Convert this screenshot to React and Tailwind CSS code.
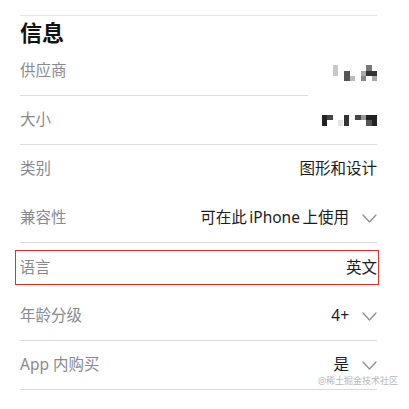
const font = { fontFamily: '"Noto Sans", "Noto Sans CJK SC", sans-serif' };

const Chevron = () => (
  <svg width="15" height="9" viewBox="0 0 15 9" className="ml-[13px] shrink-0">
    <path d="M1 1 L7.5 8 L14 1" fill="none" stroke="#8e8e93" strokeWidth="1.3" strokeLinecap="round" strokeLinejoin="round" />
  </svg>
);

const Mosaic = ({ width, height, rects }) => (
  <svg width={width} height={height} viewBox={`0 0 ${width} ${height}`}>
    {rects.map(([x, y, w, h, c], i) => (
      <rect key={i} x={x} y={y} width={w} height={h} fill={c} />
    ))}
  </svg>
);

const vendorRects = [
  [0, 0, 5, 11, "#c8c8c8"],
  [11, 6, 6, 10, "#555555"],
  [17, 11, 5, 5, "#bbbbbb"],
  [28, 6, 5, 5, "#aaaaaa"],
  [28, 11, 5, 5, "#888888"],
  [33, 0, 6, 6, "#777777"],
  [33, 6, 11, 5, "#333333"],
  [39, 11, 5, 5, "#aaaaaa"],
];

const sizeRects = [
  [0, 0, 5, 11, "#222222"],
  [5, 0, 6, 5, "#444444"],
  [16, 5, 5, 6, "#e4e4e4"],
  [22, 0, 5, 11, "#333333"],
  [33, 0, 6, 5, "#444444"],
  [39, 0, 5, 5, "#999999"],
  [44, 0, 11, 11, "#222222"],
  [44, 5, 6, 6, "#555555"],
];

const Row = ({ label, children, border = true, shortBorder = false }) => (
  <div className="relative">
    <div className="flex h-[48px] items-center justify-between">
      <span className="text-[15.5px] text-[#8a8a8e]">{label}</span>
      <div className="flex items-center text-[15.5px] text-[#1c1c1e]">{children}</div>
    </div>
    {border ? (
      <div className={`h-px bg-[#dcdcdc] ${shortBorder ? "w-[288px]" : "w-full"}`} />
    ) : (
      <div className="h-px" />
    )}
  </div>
);

export default function App() {
  return (
    <div className="relative h-[409px] w-[409px] overflow-hidden bg-white" style={font}>
      <div className="pl-5 pr-8 pt-[15px]">
        <div className="h-px bg-[#e6e6e6]" />
        <h2 className="flex h-[31px] items-center pt-[1px] text-[22px] font-bold text-[#111]">信息</h2>

        <Row label="供应商" shortBorder>
          <div className="pt-[4px]">
            <Mosaic width={44} height={17} rects={vendorRects} />
          </div>
        </Row>
        <Row label="大小">
          <Mosaic width={55} height={11} rects={sizeRects} />
        </Row>
        <Row label="类别" border={false}>
          图形和设计
        </Row>
        <Row label="兼容性">
          {"可在此\u2009iPhone\u2009上使用"}
          <Chevron />
        </Row>

        <div className="flex h-[49px] items-center">
          <div className="-ml-[5px] -mr-[2px] flex h-[35px] flex-1 items-center justify-between border-[1.5px] border-[#d9342b] pl-[3.5px] pr-[1px]">
            <span className="text-[15.5px] text-[#8a8a8e]">语言</span>
            <span className="text-[15.5px] text-[#1c1c1e]">英文</span>
          </div>
        </div>

        <Row label="年龄分级">
          4+
          <Chevron />
        </Row>
        <Row label="App 内购买">
          是
          <Chevron />
        </Row>
      </div>

      <div className="absolute left-[318px] top-[376px] text-[9px] leading-none text-[#b8b8b8]">
        @稀土掘金技术社区
      </div>
    </div>
  );
}
